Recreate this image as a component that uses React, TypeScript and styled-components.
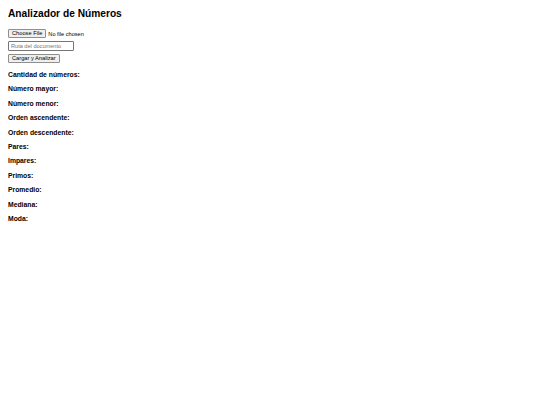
import React from 'react';
import styled, { createGlobalStyle } from 'styled-components';

const GlobalStyle = createGlobalStyle`
  body {
    margin: 8px;
    background: #ffffff;
    font-family: "Liberation Sans", Arial, sans-serif;
    color: #000000;
  }
`;

const Title = styled.h1`
  font-size: 10.2px;
  font-weight: bold;
  margin: 0 0 9px 0;
  line-height: 12px;
`;

const Form = styled.div`
  display: flex;
  flex-direction: column;
  align-items: flex-start;
  gap: 3px;
  margin-bottom: 5px;
`;

const FileRow = styled.div`
  display: flex;
  align-items: center;
  gap: 2px;
  font-size: 5.6px;
`;

const FileButton = styled.button`
  font-family: inherit;
  font-size: 5.7px;
  height: 9px;
  line-height: 7px;
  padding: 0 3px;
  border: 1px solid #8f8f8f;
  border-radius: 1px;
  background: #efefef;
  color: #000;
`;

const PathInput = styled.input`
  font-family: inherit;
  font-size: 5.6px;
  width: 66px;
  height: 10px;
  box-sizing: border-box;
  padding: 0 2px;
  border: 1px solid #767676;
  border-radius: 1px;
  &::placeholder {
    color: #757575;
  }
`;

const Label = styled.p`
  font-size: 6.8px;
  font-weight: bold;
  margin: 0;
  line-height: 14.4px;
`;

const labels = [
  'Cantidad de números:',
  'Número mayor:',
  'Número menor:',
  'Orden ascendente:',
  'Orden descendente:',
  'Pares:',
  'Impares:',
  'Primos:',
  'Promedio:',
  'Mediana:',
  'Moda:',
];

export default function App() {
  return (
    <>
      <GlobalStyle />
      <Title>Analizador de Números</Title>
      <Form>
        <FileRow>
          <FileButton>Choose File</FileButton>
          <span>No file chosen</span>
        </FileRow>
        <PathInput placeholder="Ruta del documento" />
        <FileButton>Cargar y Analizar</FileButton>
      </Form>
      {labels.map((label) => (
        <Label key={label}>{label}</Label>
      ))}
    </>
  );
}
